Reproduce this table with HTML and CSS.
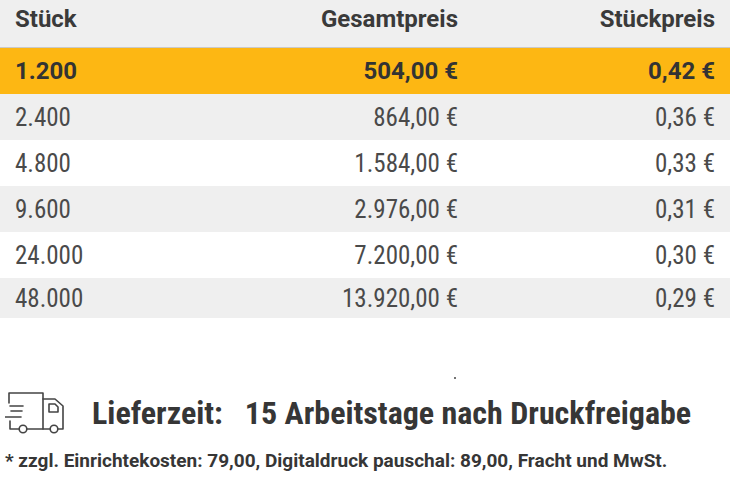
FILE: index.html
```html
<!DOCTYPE html>
<html lang="de">
<head>
<meta charset="utf-8">
<title>Staffelpreise</title>
<link rel="stylesheet" href="styles.css">
</head>
<body>
<div class="prices">
  <div class="row head">
    <div class="c1">Stück</div>
    <div class="c2">Gesamtpreis</div>
    <div class="c3">Stückpreis</div>
  </div>
  <div class="row active">
    <div class="c1">1.200</div>
    <div class="c2">504,00 €</div>
    <div class="c3">0,42 €</div>
  </div>
  <div class="row grey">
    <div class="c1">2.400</div>
    <div class="c2">864,00 €</div>
    <div class="c3">0,36 €</div>
  </div>
  <div class="row">
    <div class="c1">4.800</div>
    <div class="c2">1.584,00 €</div>
    <div class="c3">0,33 €</div>
  </div>
  <div class="row grey">
    <div class="c1">9.600</div>
    <div class="c2">2.976,00 €</div>
    <div class="c3">0,31 €</div>
  </div>
  <div class="row">
    <div class="c1">24.000</div>
    <div class="c2">7.200,00 €</div>
    <div class="c3">0,30 €</div>
  </div>
  <div class="row grey last">
    <div class="c1">48.000</div>
    <div class="c2">13.920,00 €</div>
    <div class="c3">0,29 €</div>
  </div>
</div>

<div class="spacer"><span class="dot"></span></div>

<div class="delivery">
  <svg class="truck" width="60" height="42" viewBox="0 0 60 42" fill="none" stroke="#444" stroke-width="1.6" stroke-linecap="round" stroke-linejoin="round">
    <path d="M4 11 V1 H38 V37"/>
    <path d="M38 7 H50 L58 14 V37 H53"/>
    <path d="M44 12 H50 L53 15 V20 H44 Z"/>
    <path d="M5 14 H18"/>
    <path d="M6 19 H17"/>
    <path d="M0 25 H16"/>
    <path d="M5 29 V37 H14"/>
    <path d="M22 37 H45"/>
    <circle cx="18" cy="37" r="3.8"/>
    <circle cx="49" cy="37" r="3.8"/>
  </svg>
  <span class="label">Lieferzeit:</span>
  <span class="value">15 Arbeitstage nach Druckfreigabe</span>
</div>
<p class="note">* zzgl. Einrichtekosten: 79,00, Digitaldruck pauschal: 89,00, Fracht und MwSt.</p>
</body>
</html>
```

FILE: styles.css
```css
html, body {
  margin: 0;
  padding: 0;
  background: #ffffff;
}
body {
  font-family: Roboto, "Liberation Sans", sans-serif;
  color: #3d3d3d;
  width: 730px;
}
.prices {
  width: 730px;
}
.row {
  display: grid;
  grid-template-columns: 216px 242px 257px;
  align-items: center;
  height: 46px;
  font-size: 25px;
  font-stretch: 75%;
  color: #4a4a4a;
}
.row .c1 { padding-left: 15px; }
.row .c2, .row .c3 { text-align: right; }
.head {
  height: 47px;
  align-items: start;
  background: #efefef;
  border-bottom: 1px solid #c9c9c9;
  font-weight: bold;
  font-stretch: 90%;
  font-size: 24px;
  color: #3a3a3a;
}
.head > div { padding-top: 5px; }
.active {
  background: #fdb713;
  font-weight: bold;
  font-stretch: 90%;
  font-size: 24px;
  color: #333333;
}
.grey { background: #efefef; }
.last { height: 40px; }
.spacer {
  height: 74px;
  position: relative;
}
.dot {
  position: absolute;
  left: 454px;
  top: 59px;
  width: 2px;
  height: 2px;
  background: #444;
  border-radius: 1px;
}
.delivery {
  display: flex;
  align-items: center;
  padding-left: 5px;
  height: 42px;
  color: #363636;
  font-weight: bold;
  font-stretch: 84%;
}
.truck {
  flex: none;
}
.label {
  font-size: 32px;
  margin-left: 27px;
}
.value {
  font-size: 32px;
  margin-left: 22px;
}
.note {
  margin: 15px 0 0 5px;
  font-size: 19px;
  font-weight: bold;
  font-stretch: 100%;
  color: #363636;
}
```
